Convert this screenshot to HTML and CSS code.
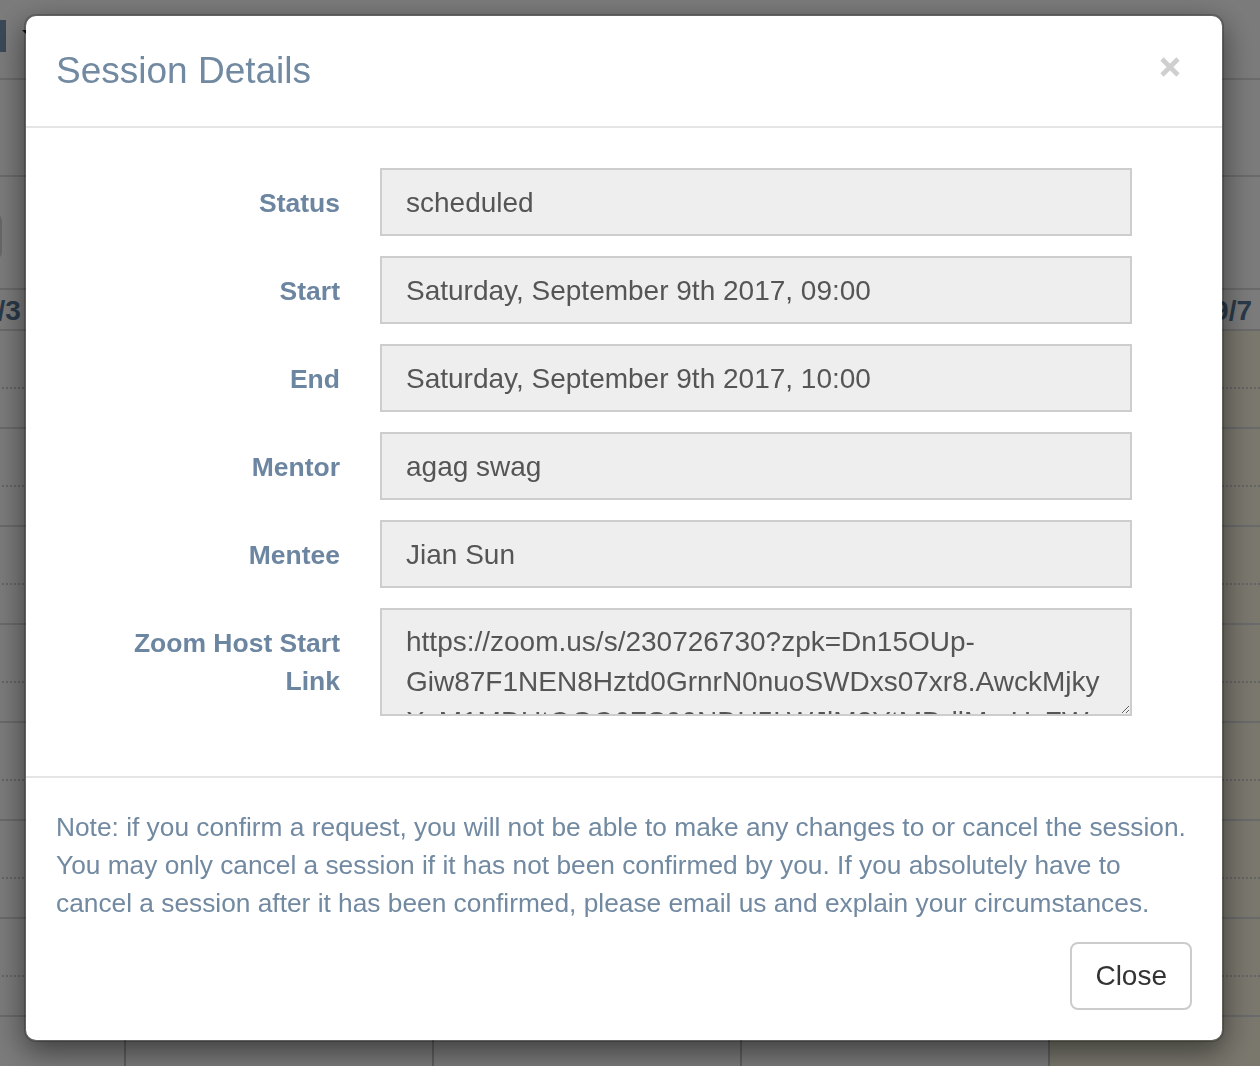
FILE: index.html
```html
<!DOCTYPE html>
<html lang="en">
<head>
<meta charset="utf-8">
<title>Session Details</title>
<link rel="stylesheet" href="styles.css">
</head>
<body>
<div class="page">
  <div class="topbar"><span class="navbtn"></span><span class="caret"></span></div>
  <div class="toolbar"></div>
  <div class="filterbar"><span class="filterbox"></span></div>
  <div class="calendar">
    <div class="col">
      <div class="head">Sun 9/3</div>
      <div class="slot"><div class="half"></div></div><div class="slot"><div class="half"></div></div><div class="slot"><div class="half"></div></div><div class="slot"><div class="half"></div></div><div class="slot"><div class="half"></div></div><div class="slot"><div class="half"></div></div><div class="slot"><div class="half"></div></div><div class="slot"><div class="half"></div></div>
    </div>
    <div class="col">
      <div class="head">Mon 9/4</div>
      <div class="slot"><div class="half"></div></div><div class="slot"><div class="half"></div></div><div class="slot"><div class="half"></div></div><div class="slot"><div class="half"></div></div><div class="slot"><div class="half"></div></div><div class="slot"><div class="half"></div></div><div class="slot"><div class="half"></div></div><div class="slot"><div class="half"></div></div>
    </div>
    <div class="col">
      <div class="head">Tue 9/5</div>
      <div class="slot"><div class="half"></div></div><div class="slot"><div class="half"></div></div><div class="slot"><div class="half"></div></div><div class="slot"><div class="half"></div></div><div class="slot"><div class="half"></div></div><div class="slot"><div class="half"></div></div><div class="slot"><div class="half"></div></div><div class="slot"><div class="half"></div></div>
    </div>
    <div class="col">
      <div class="head">Wed 9/6</div>
      <div class="slot"><div class="half"></div></div><div class="slot"><div class="half"></div></div><div class="slot"><div class="half"></div></div><div class="slot"><div class="half"></div></div><div class="slot"><div class="half"></div></div><div class="slot"><div class="half"></div></div><div class="slot"><div class="half"></div></div><div class="slot"><div class="half"></div></div>
    </div>
    <div class="col today">
      <div class="head">Thu 9/7</div>
      <div class="slot"><div class="half"></div></div><div class="slot"><div class="half"></div></div><div class="slot"><div class="half"></div></div><div class="slot"><div class="half"></div></div><div class="slot"><div class="half"></div></div><div class="slot"><div class="half"></div></div><div class="slot"><div class="half"></div></div><div class="slot"><div class="half"></div></div>
    </div>
  </div>
</div>

<div class="backdrop"></div>

<div class="modal-wrap">
  <div class="modal">
    <div class="modal-header">
      <h4 class="modal-title">Session Details</h4>
      <button class="close" type="button" aria-label="Close">
        <svg width="20" height="20" viewBox="0 0 20 20"><path d="M2 2 L18 18 M18 2 L2 18" stroke="#cfcfcf" stroke-width="4.6" fill="none"/></svg>
      </button>
    </div>
    <div class="modal-body">
      <form class="form">
        <label class="control-label">Status</label>
        <input class="form-control" type="text" readonly value="scheduled">
        <label class="control-label">Start</label>
        <input class="form-control" type="text" readonly value="Saturday, September 9th 2017, 09:00">
        <label class="control-label">End</label>
        <input class="form-control" type="text" readonly value="Saturday, September 9th 2017, 10:00">
        <label class="control-label">Mentor</label>
        <input class="form-control" type="text" readonly value="agag swag">
        <label class="control-label">Mentee</label>
        <input class="form-control" type="text" readonly value="Jian Sun">
        <label class="control-label">Zoom Host Start Link</label>
        <textarea class="form-control area" readonly>https://zoom.us/s/230726730?zpk=Dn15OUp-Giw87F1NEN8Hztd0GrnrN0nuoSWDxs07xr8.AwckMjkyXzM1MDUtOGQ0ZS00NDU5LWJlM2YtMDdlMmUzZWYxNjkwFgAAAAAAAAAAAAAAAAAAAAAAAAAAAAAAAA</textarea>
      </form>
    </div>
    <div class="modal-footer">
      <p class="note">Note: if you confirm a request, you will not be able to make any changes to or cancel the session. You may only cancel a session if it has not been confirmed by you. If you absolutely have to cancel a session after it has been confirmed, please email us and explain your circumstances.</p>
      <button class="btn" type="button">Close</button>
    </div>
  </div>
</div>
</body>
</html>
```
FILE: styles.css
```css
html, body {
  margin: 0;
  padding: 0;
}
body {
  font-family: "Liberation Sans", Arial, Helvetica, sans-serif;
  overflow: hidden;
}

/* ---------- page behind the modal ---------- */
.page {
  height: 1066px;
  overflow: hidden;
  background: #fff;
}
.topbar {
  height: 78px;
  border-bottom: 2px solid #dedede;
  display: flex;
  align-items: flex-start;
}
.navbtn {
  display: block;
  width: 106px;
  height: 32px;
  margin-left: -100px;
  margin-top: 20px;
  background: #7a95b4;
}
.caret {
  display: block;
  margin-top: 30px;
  margin-left: 16px;
  width: 0;
  height: 0;
  border-left: 4px solid transparent;
  border-right: 4px solid transparent;
  border-top: 4px solid #1e2a36;
}
.toolbar {
  height: 95px;
  border-bottom: 2px solid #dcdcdc;
}
.filterbar {
  height: 111px;
  border-bottom: 2px solid #dcdcdc;
  display: flex;
  align-items: flex-start;
}
.filterbox {
  display: block;
  width: 102px;
  height: 47px;
  margin-left: -100px;
  margin-top: 36px;
  border: 2px solid #d6d6d6;
  border-radius: 8px;
  box-sizing: border-box;
}
.calendar {
  display: flex;
  margin-left: -182px;
}
.col {
  flex: 0 0 308px;
  box-sizing: border-box;
  border-right: 2px solid #c4c4c4;
}
.head {
  height: 39px;
  border-bottom: 2px solid #dcdcdc;
  text-align: center;
  font-size: 28px;
  font-weight: bold;
  line-height: 41px;
  color: #587797;
}
.slot {
  height: 96px;
  border-bottom: 2px solid #dcdcdc;
}
.half {
  height: 56px;
  border-bottom: 2px dotted #cfcfcf;
}
.today .slot {
  background: #fcf8e3;
}

.backdrop {
  position: fixed;
  inset: 0;
  background: rgba(0, 0, 0, 0.518);
}

/* ---------- modal ---------- */
.modal-wrap {
  position: fixed;
  top: 14px;
  left: 24px;
  width: 1200px;
}
.modal {
  background: #fff;
  background-clip: padding-box;
  border: 2px solid rgba(0, 0, 0, 0.2);
  border-radius: 12px;
  box-shadow: 0 10px 30px rgba(0, 0, 0, 0.5);
}
.modal-header {
  display: flex;
  justify-content: space-between;
  align-items: flex-start;
  padding: 30px;
  border-bottom: 2px solid #e5e5e5;
}
.modal-title {
  margin: 0;
  font-size: 37px;
  line-height: 50px;
  font-weight: normal;
  color: #7189a1;
}
.close {
  margin: 11px 12px 0 0;
  padding: 0;
  border: 0;
  background: none;
  width: 20px;
  height: 20px;
  display: block;
}
.close svg {
  display: block;
}
.modal-body {
  padding: 40px 90px 60px 30px;
}
.form {
  display: grid;
  grid-template-columns: 284px 1fr;
  column-gap: 40px;
  row-gap: 20px;
  margin: 0;
}
.control-label {
  text-align: right;
  padding-top: 16px;
  padding-left: 40px;
  font-size: 26.5px;
  line-height: 38px;
  font-weight: bold;
  color: #6c86a1;
}
.form-control {
  display: block;
  width: 100%;
  height: 68px;
  box-sizing: border-box;
  margin: 0;
  padding: 1px 24px 0;
  border: 2px solid #cdcdcd;
  border-radius: 0;
  background: #eeeeee;
  font-family: "Liberation Sans", Arial, Helvetica, sans-serif;
  font-size: 28px;
  color: #555;
  outline: none;
}
.area {
  height: 108px;
  padding: 12px 24px;
  line-height: 40px;
  overflow: hidden;
  resize: vertical;
}
.modal-footer {
  padding: 30px;
  border-top: 2px solid #e5e5e5;
}
.note {
  margin: 0 0 20px;
  font-size: 26.3px;
  line-height: 38px;
  color: #7189a1;
}
.btn {
  display: block;
  margin-left: auto;
  height: 68px;
  padding: 0 23px;
  border: 2px solid #cccccc;
  border-radius: 8px;
  background: #fff;
  font-family: "Liberation Sans", Arial, Helvetica, sans-serif;
  font-size: 28px;
  color: #333;
}
```
